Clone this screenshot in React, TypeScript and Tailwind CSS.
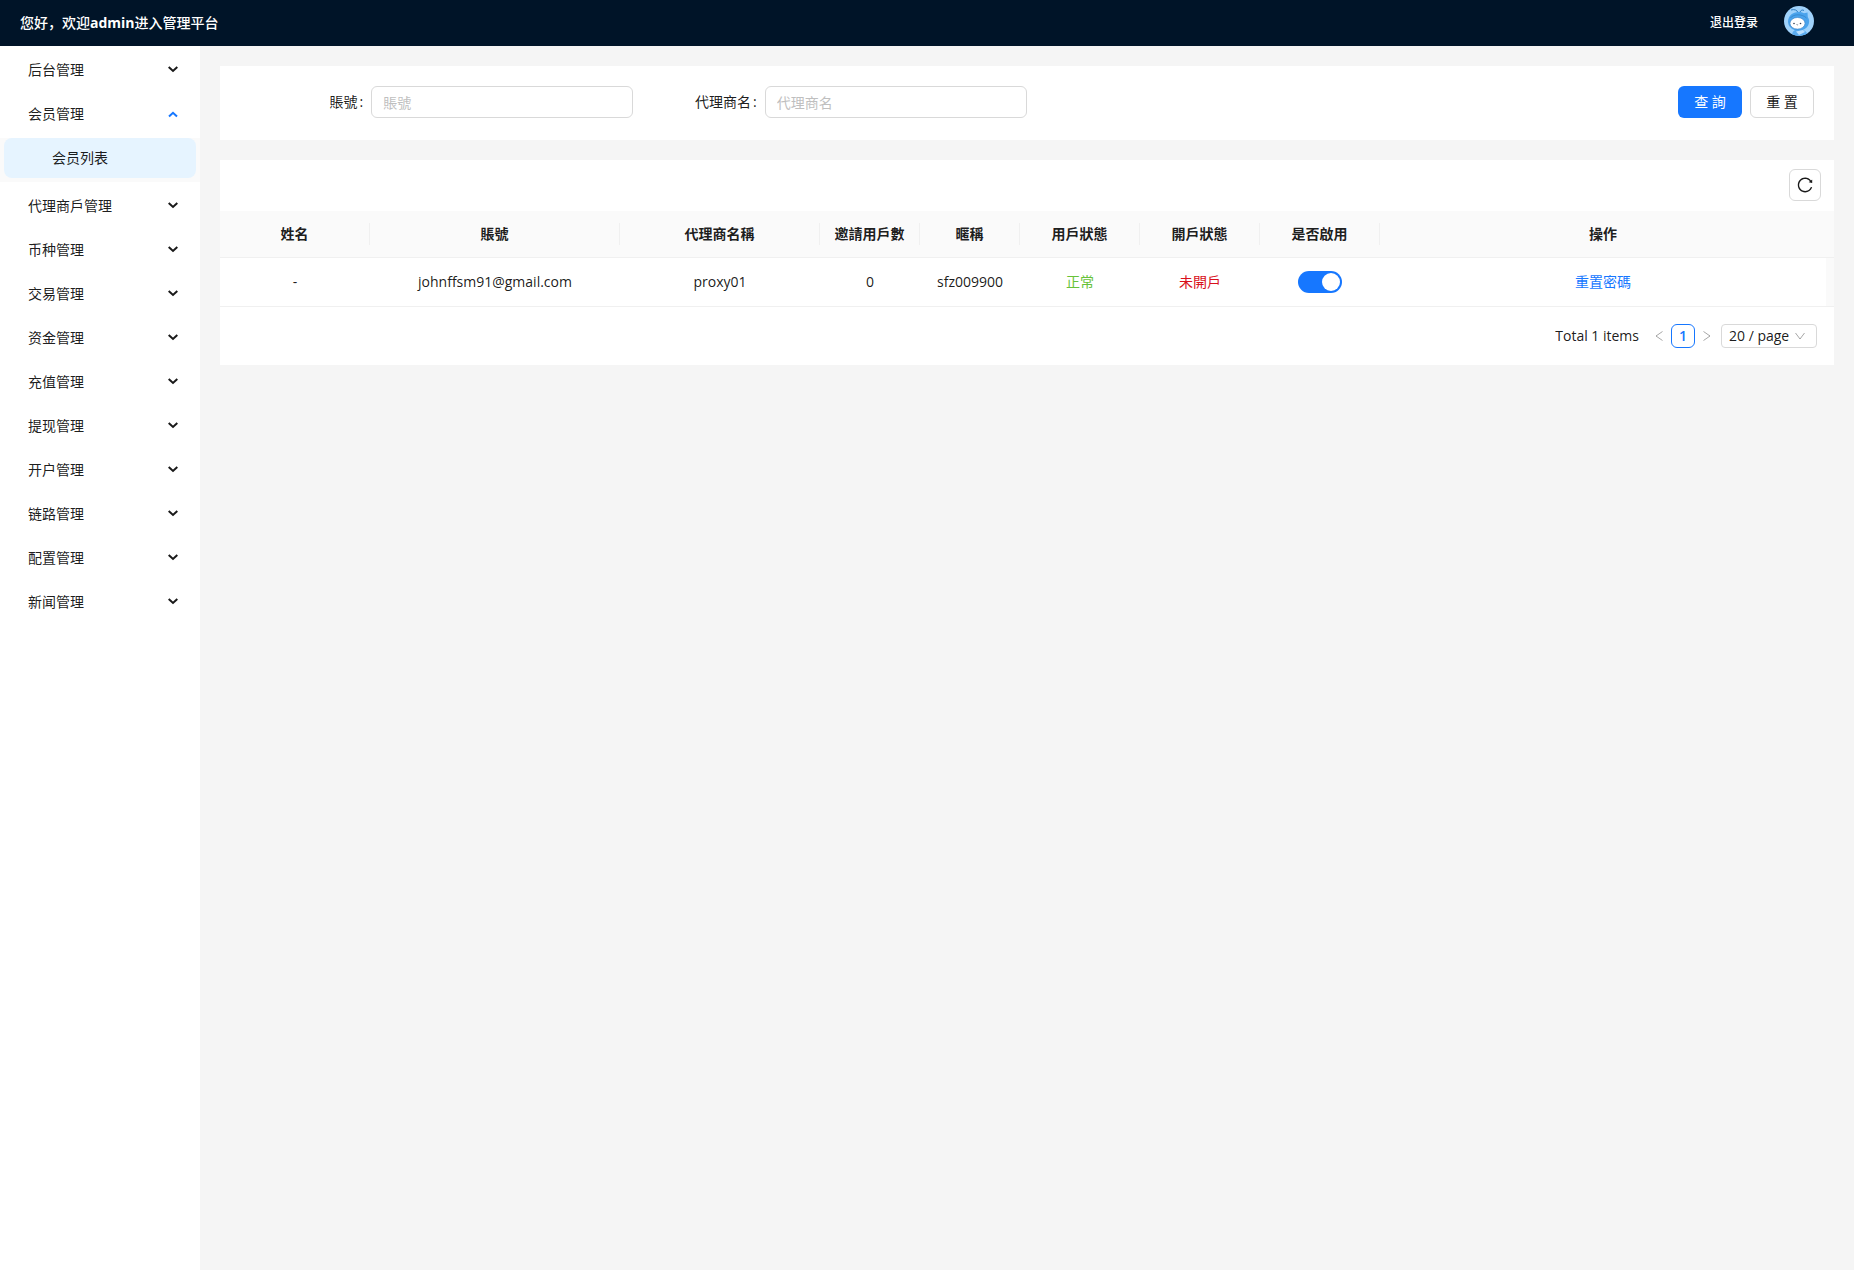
import { useState } from "react";

const MENU = [
  { label: "后台管理" },
  { label: "会员管理", children: ["会员列表"] },
  { label: "代理商戶管理" },
  { label: "币种管理" },
  { label: "交易管理" },
  { label: "资金管理" },
  { label: "充值管理" },
  { label: "提现管理" },
  { label: "开户管理" },
  { label: "链路管理" },
  { label: "配置管理" },
  { label: "新闻管理" },
];

const COLUMNS = [
  { title: "姓名", col: "w-[150px]" },
  { title: "賬號", col: "w-[250px]" },
  { title: "代理商名稱", col: "w-[200px]" },
  { title: "邀請用戶數", col: "w-[100px]" },
  { title: "暱稱", col: "w-[100px]" },
  { title: "用戶狀態", col: "w-[120px]" },
  { title: "開戶狀態", col: "w-[120px]" },
  { title: "是否啟用", col: "w-[120px]" },
  { title: "操作", col: "" },
];

function MenuArrow({ open }: { open: boolean }) {
  return (
    <svg
      width="12"
      height="10"
      viewBox="0 0 12 10"
      fill="none"
      stroke="currentColor"
      strokeWidth="2"
      className={open ? "text-[#1677ff]" : "text-black/90"}
    >
      <path d={open ? "M2 7.500 6 3.800l4 3.700" : "M1.700 2 6 6l4.300-4"} />
    </svg>
  );
}

function Avatar() {
  return (
    <svg width="30" height="30" viewBox="0 0 30 30" role="img" aria-label="admin">
      <defs>
        <clipPath id="avatar-clip">
          <circle cx="15" cy="15" r="15" />
        </clipPath>
      </defs>
      <g clipPath="url(#avatar-clip)">
        <rect width="30" height="30" fill="#9fd2fb" />
        <path d="M14 6.500C13 4 10.500 3 7 4M16 6C17 4 18.500 3.500 20 4.500" fill="none" stroke="#2f7fc4" strokeWidth="1" />
        <path d="M8 30c0-5 3-7 7-7s8 2 9 7z" fill="#5aacf0" />
        <path d="M4 16C4 9.500 9 6 14.500 6c2 0 4 .5 5.500 1.300L23.500 6.500 23.800 11c1 1.500 1.500 3.300 1.300 5-.3 5-5 8.500-10.600 8.500S4.500 21.500 4 16z" fill="#4aa3ec" />
        <path d="M6.500 12C9 8 18 7.500 22.500 12" fill="none" stroke="#2f7fc4" strokeWidth=".7" />
        <ellipse cx="13.500" cy="17.300" rx="7.500" ry="5.800" fill="#fff" stroke="#3b82c4" strokeWidth=".6" />
        <circle cx="10" cy="17.500" r=".8" fill="#334155" />
        <circle cx="16.500" cy="17.500" r=".8" fill="#334155" />
        <path d="M12.500 18.500q.8.800 1.600 0" stroke="#334155" strokeWidth=".6" fill="none" />
        <path d="M12 25.500l3 3.500 6-3-2-2z" fill="#b9defd" />
      </g>
    </svg>
  );
}

function Field({ id, label }: { id: string; label: string }) {
  return (
    <div className="flex items-center">
      <label htmlFor={id} className="w-1/3 pr-2 text-right">
        {label}
        <span className="ml-0.5">:</span>
      </label>
      <input
        id={id}
        type="text"
        placeholder={label}
        className="h-8 w-2/3 rounded-md border border-[#d9d9d9] bg-white px-[11px] outline-none placeholder:text-[#bfbfbf]"
      />
    </div>
  );
}

export default function App() {
  const [open, setOpen] = useState<string | null>("会员管理");
  const [enabled, setEnabled] = useState(true);

  return (
    <div className="flex min-h-screen flex-col bg-[#f5f5f5] font-['Open_Sans','Noto_Sans_CJK_SC',sans-serif] text-sm leading-[22px] text-black/90">
      <header className="flex h-[46px] items-center justify-between bg-[#001428] pr-10 pl-5 text-white">
        <h1 className="text-sm font-medium">
          您好，欢迎<strong>admin</strong>进入管理平台
        </h1>
        <div className="flex items-center gap-[26px] pb-1">
          <button type="button" className="pt-1 text-xs font-medium">
            退出登录
          </button>
          <Avatar />
        </div>
      </header>

      <div className="flex flex-1">
        <nav className="w-[200px] shrink-0 bg-white pt-1">
          <ul>
            {MENU.map((item) => {
              const isOpen = open === item.label && !!item.children;
              return (
                <li key={item.label}>
                  <button
                    type="button"
                    aria-expanded={isOpen}
                    onClick={() => setOpen(isOpen ? null : item.label)}
                    className="mb-1 flex h-10 w-full items-center justify-between pr-[21px] pl-7"
                  >
                    {item.label}
                    <MenuArrow open={isOpen} />
                  </button>
                  {isOpen && (
                    <ul className="mb-1 bg-[#fafafa] px-1 pb-1">
                      {item.children?.map((child) => (
                        <li key={child}>
                          <a
                            href="#members"
                            className="flex h-10 items-center rounded-lg bg-[#e6f4ff] pl-12"
                          >
                            {child}
                          </a>
                        </li>
                      ))}
                    </ul>
                  )}
                </li>
              );
            })}
          </ul>
        </nav>

        <main className="flex min-w-0 flex-1 flex-col gap-5 p-5">
          <form className="grid grid-cols-4 items-center bg-white px-5 pt-5 pb-[22px]">
            <Field id="account" label="賬號" />
            <Field id="agent" label="代理商名" />
            <div className="col-start-4 flex justify-end gap-2">
              <button type="button" className="h-8 w-16 rounded-md bg-[#1677ff] text-white">
                查 詢
              </button>
              <button type="reset" className="h-8 w-16 rounded-md border border-[#d9d9d9] bg-white">
                重 置
              </button>
            </div>
          </form>

          <section className="bg-white">
            <div className="flex justify-end px-[13px] pt-[9px] pb-[10px]">
              <button
                type="button"
                aria-label="刷新"
                className="flex size-8 items-center justify-center rounded-md border border-[#d9d9d9]"
              >
                <svg width="18" height="18" viewBox="0 0 1024 1024" fill="currentColor">
                  <path d="M909.100 209.300l-56.400 44.100C775.800 155.100 656.200 92 521.900 92 290 92 102.300 279.500 102 511.500 101.700 743.700 289.800 932 521.900 932c181.300 0 335.800-115 394.600-276.100 1.500-4.200-.7-8.900-4.900-10.300l-56.700-19.500a8 8 0 0 0-10.100 4.800c-1.800 5-3.800 10-5.900 14.900-17.300 41-42.100 77.800-73.700 109.400A344.770 344.770 0 0 1 655.900 829c-42.300 17.900-87.400 27-133.800 27-46.500 0-91.500-9.100-133.800-27A341.500 341.500 0 0 1 279 755.200a342.160 342.160 0 0 1-73.700-109.400c-17.900-42.400-27-87.400-27-133.900s9.100-91.500 27-133.900c17.300-41 42.100-77.800 73.700-109.400 31.600-31.600 68.400-56.400 109.300-73.800 42.300-17.900 87.400-27 133.800-27 46.500 0 91.500 9.100 133.800 27a341.500 341.500 0 0 1 109.300 73.800c9.900 9.900 19.200 20.400 27.800 31.400l-60.200 47a8 8 0 0 0 3 14.100l175.600 43c5 1.200 9.900-2.600 9.900-7.700l.8-180.900c-.1-6.600-7.800-10.300-13-6.200z" />
                </svg>
              </button>
            </div>

            <table className="w-full table-fixed border-separate border-spacing-0 text-center">
              <colgroup>
                {COLUMNS.map((c) => (
                  <col key={c.title} className={c.col} />
                ))}
                <col className="w-2" />
              </colgroup>
              <thead>
                <tr className="bg-[#fafafa] *:h-[47px] *:border-b *:border-[#f0f0f0]">
                  {COLUMNS.map((c, i) => (
                    <th key={c.title} scope="col" className="p-0 font-semibold whitespace-nowrap">
                      <div className={i < COLUMNS.length - 1 ? "border-r border-[#f0f0f0]" : ""}>{c.title}</div>
                    </th>
                  ))}
                  <td />
                </tr>
              </thead>
              <tbody>
                <tr className="*:h-[49px] *:border-b *:border-[#f0f0f0]">
                  <td>-</td>
                  <td>johnffsm91@gmail.com</td>
                  <td>proxy01</td>
                  <td>0</td>
                  <td>sfz009900</td>
                  <td className="text-[#67c23a]">正常</td>
                  <td className="text-[#d9101b]">未開戶</td>
                  <td>
                    <button
                      type="button"
                      role="switch"
                      aria-checked={enabled}
                      aria-label="是否啟用"
                      onClick={() => setEnabled(!enabled)}
                      className={`mx-auto flex h-[22px] w-11 items-center rounded-full p-[2px] ${enabled ? "justify-end bg-[#1677ff]" : "justify-start bg-black/25"}`}
                    >
                      <span className="size-[18px] rounded-full bg-white" />
                    </button>
                  </td>
                  <td>
                    <a href="#reset-password" className="text-[#1677ff]">
                      重置密碼
                    </a>
                  </td>
                  <td className="bg-[#fafafa]" />
                </tr>
              </tbody>
            </table>

            <div className="flex items-center justify-end p-[17px]">
              <span className="mr-2">Total 1 items</span>
              <button type="button" aria-label="上一页" disabled className="flex size-6 items-center justify-center text-black/35">
                <svg width="8" height="12" viewBox="0 0 8 12" fill="none" stroke="currentColor">
                  <path d="M7.500 1.500 1 6 7.500 10.500" />
                </svg>
              </button>
              <button type="button" aria-current="page" className="h-6 w-6 rounded-md border border-[#1677ff] leading-[22px] font-semibold text-[#1677ff]">
                1
              </button>
              <button type="button" aria-label="下一页" disabled className="flex size-6 items-center justify-center text-black/35">
                <svg width="8" height="12" viewBox="0 0 8 12" fill="none" stroke="currentColor">
                  <path d="M.5 1.500 7 6 .5 10.500" />
                </svg>
              </button>
              <div className="relative ml-[2px]">
                <select
                  aria-label="每页条数"
                  defaultValue="20"
                  className="h-6 w-24 appearance-none rounded border border-[#d9d9d9] bg-white pl-[7px] leading-[22px] outline-none"
                >
                  <option value="10">10 / page</option>
                  <option value="20">20 / page</option>
                  <option value="50">50 / page</option>
                </select>
                <svg
                  width="12"
                  height="8"
                  viewBox="0 0 12 8"
                  fill="none"
                  stroke="currentColor"
                  className="pointer-events-none absolute top-2 right-[11px] text-black/35"
                >
                  <path d="M1.500 1 6 7 10.500 1" />
                </svg>
              </div>
            </div>
          </section>
        </main>
      </div>
    </div>
  );
}
